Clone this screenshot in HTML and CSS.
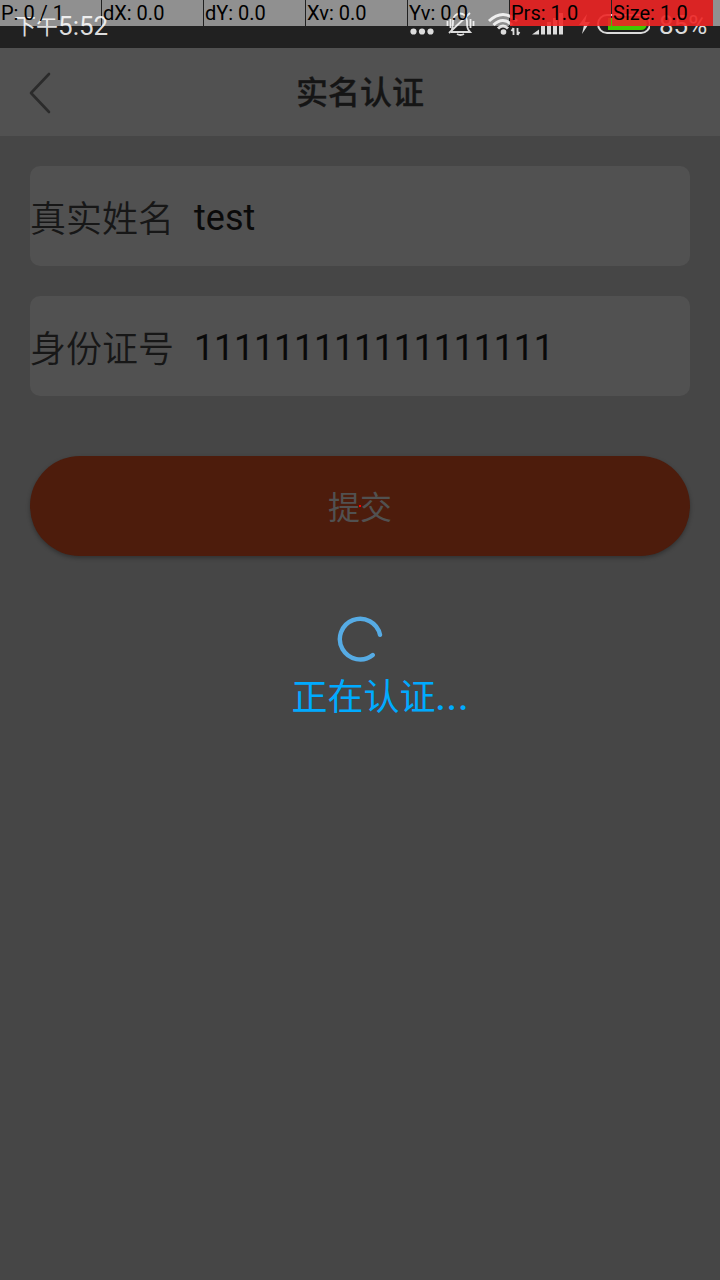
FILE: index.html
```html
<!DOCTYPE html>
<html lang="zh-CN">
<head>
<meta charset="utf-8">
<title>实名认证</title>
<link rel="stylesheet" href="styles.css">
</head>
<body>
<div class="screen">
  <div class="status">
    <span class="clock"><span class="period">下午</span>5:52</span>
    <svg class="status-icons" width="250" height="48" viewBox="400 0 250 48">
      <g fill="#dcdcdc"><circle cx="413.5" cy="31.5" r="3.1"/><circle cx="422" cy="31.5" r="3.1"/><circle cx="430.5" cy="31.5" r="3.1"/></g>
      <g fill="none" stroke="#dcdcdc" stroke-width="1.8">
        <path d="M451 32h19c-3-3-3-6-3-11 0-10-14-10-14 0 0 4 0 7-2 11M449 33L470 13"/>
        <path d="M457 34q3.500 2 7 0M450.500 19v9M447.500 21v5M470.500 19v9M473.500 21v5"/>
      </g>
      <g fill="none" stroke="#dcdcdc" stroke-width="3">
        <path d="M489 21Q503 8 517 21M493.500 25Q503 16 512 25M498 28.500Q503 23.500 508 28.500"/>
      </g>
      <circle cx="503.500" cy="32" r="2.800" fill="#dcdcdc"/>
      <path d="M513.500 28v7M517.500 28v7M511.500 31l2-3M519.500 32l-2 3" stroke="#dcdcdc" stroke-width="1.800"/>
      <path fill="#dcdcdc" d="M532 34.500l7-5v5zM541 26h4v8.500h-4zM547 22h4v12.500h-4zM553 18h4v16.500h-4zM559 13h4v21.500h-4z"/>
      <path fill="#dcdcdc" d="M587 14l-8 11h5l-2 9 8-12h-5z"/>
      <rect x="598" y="15" width="52" height="18" rx="9" fill="none" stroke="#dcdcdc" stroke-width="2"/>
      <path fill="#43c800" d="M608 18h33q5 0 6 6-1 6-6 6h-33z"/>
    </svg>
    <span class="battery">85%</span>
  </div>
  <div class="pointer">
    <span class="cell">P: 0 / 1</span><span class="cell">dX: 0.0</span><span class="cell">dY: 0.0</span><span class="cell">Xv: 0.0</span><span class="cell">Yv: 0.0</span><span class="cell hot">Prs: 1.0</span><span class="cell hot">Size: 1.0</span><span class="rest"></span>
  </div>
  <header class="titlebar">
    <svg class="back" width="24" height="44" viewBox="0 0 24 44"><path d="M21 3L3 22l18 19" fill="none" stroke="#2b2b2b" stroke-width="2.600" stroke-linecap="round" stroke-linejoin="round"/></svg>
    <h1 class="title">实名认证</h1>
  </header>
  <main class="content">
    <div class="field"><span class="label">真实姓名</span><span class="value">test</span></div>
    <div class="field"><span class="label">身份证号</span><span class="value digits">111111111111111111</span></div>
    <button class="submit">提交<i class="touch"></i></button>
    <div class="loading">
      <svg class="spinner" width="48" height="48" viewBox="0 0 48 48"><path d="M44 18.800A20.300 20.300 0 1 0 36.800 39" fill="none" stroke="#56abe4" stroke-width="4.400" stroke-linecap="round"/></svg>
      <span class="loading-text">正在认证<span class="dots">...</span></span>
    </div>
  </main>
</div>
</body>
</html>
```
FILE: styles.css
```css
* { box-sizing: border-box; }
body { margin: 0; font-family: Roboto, "Noto Sans CJK SC", sans-serif; }
.screen { position: relative; width: 720px; height: 1280px; background: #464646; overflow: hidden; }
.status { display: flex; height: 48px; background: #212121; color: #dcdcdc; }
.clock { width: 386px; margin-left: 14px; padding-top: 9px; font-size: 26px; line-height: 34px; white-space: nowrap; }
.period { font-size: 22px; line-height: 1; vertical-align: 1px; }
.status-icons { flex: none; }
.battery { margin-left: 9px; padding-top: 10px; font-size: 26px; line-height: 30px; }
.pointer { position: absolute; top: 0; left: 0; display: flex; gap: 1px; width: 720px; height: 26px; }
.cell { width: 101px; padding-left: 1px; background: rgba(255, 255, 255, .5); color: #000; font-size: 20px; line-height: 27px; white-space: nowrap; }
.hot { background: rgba(238, 37, 37, .9); }
.rest { width: 7px; margin-left: -1px; background: rgba(255, 255, 255, .5); }
.titlebar { display: grid; grid-template-columns: 60px 1fr 60px; align-items: center; height: 88px; background: #515151; }
.back { margin: 2px 0 0 28px; }
.title { margin: 2px 0 0; text-align: center; color: #151515; font-size: 32px; line-height: 44px; font-weight: 500; -webkit-text-stroke: .3px #151515; }
.content { display: flex; flex-direction: column; padding: 30px; }
.field { display: flex; align-items: center; gap: 20px; height: 100px; margin-bottom: 30px; border-radius: 10px; background: #515151; font-size: 36px; }
.label { margin-top: -1px; color: #171717; font-weight: 350; }
.value { margin-top: 4px; color: #0a0a0a; }
.digits { letter-spacing: -.25px; }
.submit { position: relative; height: 100px; margin-top: 30px; padding: 0 0 2px; border: 0; border-radius: 50px; background: #4d1c0c; box-shadow: 0 2px 4px rgba(0, 0, 0, .3); color: #515151; font: 32px Roboto, "Noto Sans CJK SC", sans-serif; }
.touch { position: absolute; left: 329px; top: 49px; width: 2px; height: 2px; background: #f00; }
.loading { display: flex; flex-direction: column; align-items: center; padding-top: 60px; }
.loading-text { margin: 8px 0 0 41px; color: #00aaff; font-size: 36px; line-height: 52px; }
.dots { letter-spacing: 1.4px; font-weight: 500; }
```
